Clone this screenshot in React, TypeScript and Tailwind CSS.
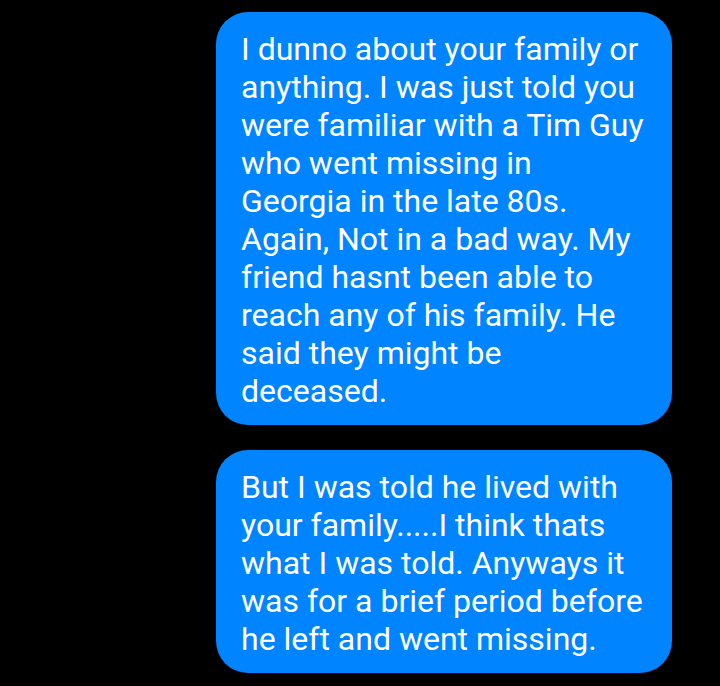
const messages = [
  [
    'I dunno about your family or',
    'anything. I was just told you',
    'were familiar with a Tim Guy',
    'who went missing in',
    'Georgia in the late 80s.',
    'Again, Not in a bad way. My',
    'friend hasnt been able to',
    'reach any of his family. He',
    'said they might be',
    'deceased.',
  ],
  [
    'But I was told he lived with',
    'your family.....I think thats',
    'what I was told. Anyways it',
    'was for a brief period before',
    'he left and went missing.',
  ],
];

export default function App() {
  return (
    <div className="w-[720px] h-[686px] bg-black overflow-hidden flex flex-col items-end pr-[48px] pt-[12px] gap-[25px] font-['Roboto',sans-serif]">
      {messages.map((lines, i) => (
        <div key={i} className="w-[456px] bg-[#0084ff] rounded-[32px] pl-[25px] pr-[20px] pt-[18px] pb-[15px] text-white text-[32px] leading-[38px]">
          {lines.map((l, j) => (
            <div key={j} className="whitespace-nowrap">{l}</div>
          ))}
        </div>
      ))}
    </div>
  );
}
